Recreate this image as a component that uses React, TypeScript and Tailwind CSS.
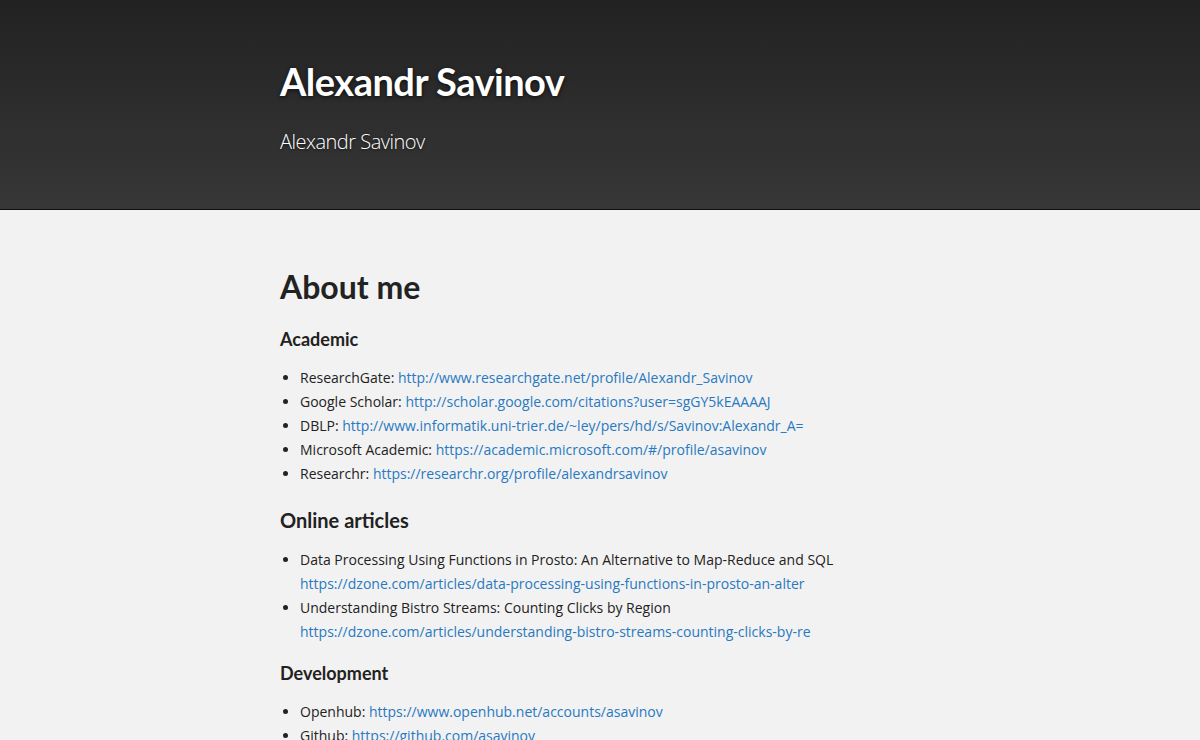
import React from "react";

const body = { fontFamily: '"Open Sans", "Noto Sans", sans-serif' };
const head = { fontFamily: 'Lato, "Open Sans", sans-serif' };

function Item({ label, href }: { label: string; href: string }) {
  return (
    <li className="leading-[24px]">
      {label} <a className="text-[#2879c1]" href="#">{href}</a>
    </li>
  );
}

function Article({ title, href }: { title: string; href: string }) {
  return (
    <li className="leading-[24px]">
      {title}
      <br />
      <a className="text-[#2879c1]" href="#">{href}</a>
    </li>
  );
}

export default function App() {
  return (
    <div className="min-h-[740px] bg-[#f2f2f2] text-[#222]" style={body}>
      <header className="h-[210px] bg-gradient-to-b from-[#222222] to-[#373737] border-b border-[#111]">
        <div className="w-[640px] mx-auto pt-[56px]">
          <h1
            className="text-[38px] font-bold text-white leading-[50px] [text-shadow:0_1px_4px_rgba(0,0,0,0.7)] tracking-[-0.5px]"
            style={head}
          >
            Alexandr Savinov
          </h1>
          <p className="mt-[22px] text-[20px] font-light text-white leading-[28px] tracking-[-0.5px] [text-shadow:0_1px_3px_rgba(0,0,0,0.6)]">
            Alexandr Savinov
          </p>
        </div>
      </header>
      <main className="w-[640px] mx-auto pt-[57px] text-[14px]">
        <h2 className="text-[32px] font-bold leading-[40px]" style={head}>
          About me
        </h2>
        <h3 className="mt-[20px] text-[18px] font-bold leading-[24px]" style={head}>
          Academic
        </h3>
        <ul className="mt-[15px] list-disc pl-[20px]">
          <Item label="ResearchGate:" href="http://www.researchgate.net/profile/Alexandr_Savinov" />
          <Item label="Google Scholar:" href="http://scholar.google.com/citations?user=sgGY5kEAAAAJ" />
          <Item label="DBLP:" href="http://www.informatik.uni-trier.de/~ley/pers/hd/s/Savinov:Alexandr_A=" />
          <Item label="Microsoft Academic:" href="https://academic.microsoft.com/#/profile/asavinov" />
          <Item label="Researchr:" href="https://researchr.org/profile/alexandrsavinov" />
        </ul>
        <h3 className="mt-[20px] text-[20px] font-bold leading-[28px]" style={head}>
          Online articles
        </h3>
        <ul className="mt-[14px] list-disc pl-[20px]">
          <Article
            title="Data Processing Using Functions in Prosto: An Alternative to Map-Reduce and SQL"
            href="https://dzone.com/articles/data-processing-using-functions-in-prosto-an-alter"
          />
          <Article
            title="Understanding Bistro Streams: Counting Clicks by Region"
            href="https://dzone.com/articles/understanding-bistro-streams-counting-clicks-by-re"
          />
        </ul>
        <h3 className="mt-[17px] text-[18px] font-bold leading-[24px]" style={head}>
          Development
        </h3>
        <ul className="mt-[15px] list-disc pl-[20px]">
          <Item label="Openhub:" href="https://www.openhub.net/accounts/asavinov" />
          <Item label="Github:" href="https://github.com/asavinov" />
        </ul>
      </main>
    </div>
  );
}
